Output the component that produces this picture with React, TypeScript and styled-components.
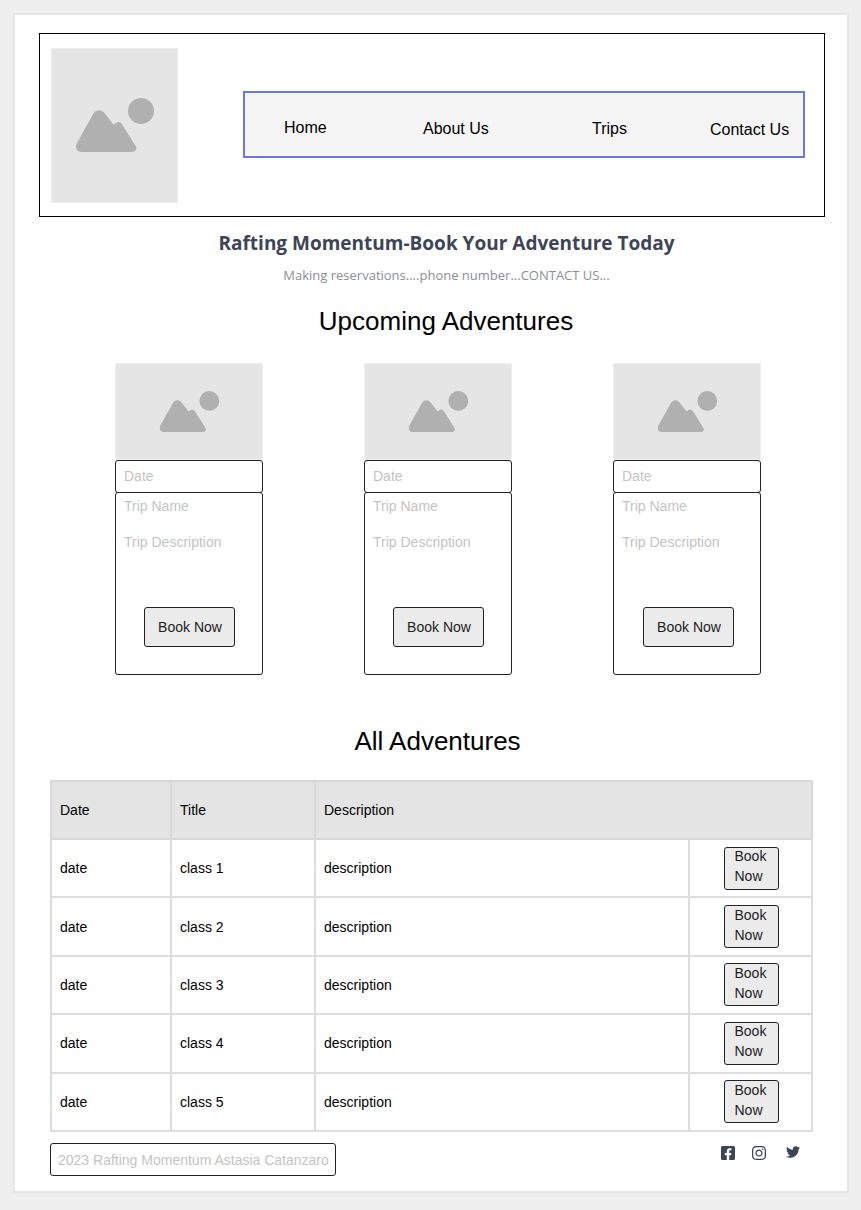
import React from 'react';
import styled, { createGlobalStyle } from 'styled-components';
import { FaFacebookSquare, FaInstagram, FaTwitter } from 'react-icons/fa';

const GlobalStyle = createGlobalStyle`
    html, body {
        margin: 0;
        padding: 0;
        background: #eeeeee;
    }
    body {
        font-family: "Liberation Sans", Arial, sans-serif;
        color: #000;
    }
    * {
        box-sizing: border-box;
    }
`;

const Page = styled.div`
    width: 861px;
    height: 1210px;
    padding: 13px 12px 17px 13px;
`;

const Panel = styled.div`
    height: 1180px;
    background: #fff;
    border: 2px solid #e6e6e6;
    padding-top: 18px;
`;

const Header = styled.header`
    display: flex;
    align-items: center;
    justify-content: space-between;
    width: 786px;
    height: 184px;
    margin-left: 24px;
    padding: 0 19px 0 11px;
    border: 1px solid #000;
`;

const Placeholder = styled.div<{ $width: number; $height: number }>`
    display: flex;
    align-items: center;
    justify-content: center;
    flex: none;
    width: ${(props) => props.$width}px;
    height: ${(props) => props.$height}px;
    background: #e5e5e5;
    border: 1px solid #eeeeee;
`;

const Nav = styled.nav`
    display: grid;
    grid-template-columns: 139px 169px 118px 1fr;
    align-items: center;
    width: 562px;
    height: 67px;
    margin-top: -2px;
    padding: 10px 0 0 39px;
    background: #f5f5f5;
    border: 2px solid #6b78e0;
`;

const NavLink = styled.a<{ $shift: number }>`
    font-size: 16px;
    line-height: 20px;
    color: #000;
    margin-top: ${(props) => props.$shift}px;
`;

const Intro = styled.div`
    margin-left: 31px;
    text-align: center;
`;

const Title = styled.h1`
    margin: 14px 0 0;
    font-family: "Open Sans", sans-serif;
    font-size: 19px;
    font-weight: 700;
    line-height: 24px;
    color: #3d4455;
`;

const Subtitle = styled.p`
    margin: 10px 0 0;
    font-family: "Open Sans", sans-serif;
    font-size: 13px;
    line-height: 20px;
    color: #8b8e99;
`;

const SectionTitle = styled.h2<{ $offset: number; $top: number }>`
    margin: ${(props) => props.$top}px 0 0 ${(props) => props.$offset}px;
    font-size: 26px;
    font-weight: 400;
    line-height: 32px;
    text-align: center;
    color: #000;
`;

const Cards = styled.div`
    display: grid;
    grid-template-columns: repeat(3, 148px);
    column-gap: 101px;
    margin: 26px 0 0 100px;
`;

const Card = styled.article`
    display: flex;
    flex-direction: column;
`;

const DateBox = styled.div`
    height: 33px;
    padding: 6px 8px;
    font-size: 14px;
    line-height: 18px;
    color: #c4c4c4;
    border: 1px solid #222;
    border-radius: 3px;
`;

const CardBody = styled.div`
    display: flex;
    flex-direction: column;
    height: 183px;
    margin-top: -1px;
    padding: 4px 8px 0;
    border: 1px solid #222;
    border-radius: 3px;
`;

const Muted = styled.div`
    font-size: 14px;
    line-height: 18px;
    color: #c4c4c4;
    margin-bottom: 18px;
`;

const BookButton = styled.button<{ $nudge: number }>`
    align-self: center;
    width: 91px;
    height: 40px;
    margin: 38px 0 0 ${(props) => props.$nudge}px;
    padding: 0 0 0 2px;
    font-family: "Liberation Sans", Arial, sans-serif;
    font-size: 14px;
    color: #222;
    background: #ebebeb;
    border: 1px solid #222;
    border-radius: 3px;
`;

const Table = styled.table`
    width: 762px;
    margin: 23px 0 0 35px;
    table-layout: fixed;
    border-collapse: collapse;
    font-size: 14px;
    color: #000;
`;

const HeadRow = styled.tr`
    height: 58px;
    background: #e4e4e4;
`;

const Row = styled.tr`
    height: 58.4px;
`;

const HeadCell = styled.th`
    padding: 8px;
    font-weight: 400;
    text-align: left;
    border: 2px solid #d8d8d8;
`;

const Cell = styled.td`
    padding: 8px;
    border: 2px solid #dddddd;
`;

const ActionCell = styled(Cell)`
    padding: 0 0 0 1px;
    text-align: center;
`;

const RowButton = styled.button`
    display: inline-block;
    vertical-align: middle;
    width: 55px;
    height: 43px;
    padding: 0 10px;
    font-family: "Liberation Sans", Arial, sans-serif;
    font-size: 14px;
    line-height: 20px;
    text-align: left;
    color: #222;
    background: #ebebeb;
    border: 1px solid #222;
    border-radius: 3px;
`;

const RowButtonLabel = styled.span`
    display: block;
    margin: -2px 0 2px;
`;

const Footer = styled.footer`
    display: flex;
    justify-content: space-between;
    align-items: flex-start;
    width: 763px;
    margin: 11px 0 0 35px;
`;

const Credit = styled.div`
    width: 286px;
    height: 33px;
    padding: 7px;
    font-size: 14px;
    line-height: 18px;
    white-space: nowrap;
    color: #c4c4c4;
    border: 1px solid #222;
    border-radius: 3px;
`;

const Socials = styled.div`
    display: grid;
    grid-template-columns: 14px 14px 14px;
    column-gap: 17px;
    align-items: start;
    margin: 2px 17px 0 0;
    color: #3d4455;
    font-size: 16px;
    line-height: 16px;
`;

const TwitterSlot = styled.span`
    margin-left: 4px;
    font-size: 14px;
`;

const MountainIcon = ({ width }: { width: number }) => (
    <svg width={width} viewBox="0 0 80 55" fill="#b0b0b0" aria-hidden="true">
        <circle cx="66" cy="13" r="13" />
        <path d="M7 54C1 54 0 49 2 45L17 18C20 11 27 10 31 17L39 27C41 24 45 22 48 28L60 47C63 51 61 54 56 54Z" />
    </svg>
);

const links = [
    { label: 'Home', shift: -2 },
    { label: 'About Us', shift: 0 },
    { label: 'Trips', shift: 0 },
    { label: 'Contact Us', shift: 2 },
];

const rows = ['class 1', 'class 2', 'class 3', 'class 4', 'class 5'];

export default function App() {
    return (
        <Page>
            <GlobalStyle />
            <Panel>
                <Header>
                    <Placeholder $width={127} $height={155}>
                        <MountainIcon width={80} />
                    </Placeholder>
                    <Nav>
                        {links.map((link) => (
                            <NavLink key={link.label} $shift={link.shift}>
                                {link.label}
                            </NavLink>
                        ))}
                    </Nav>
                </Header>
                <Intro>
                    <Title>Rafting Momentum-Book Your Adventure Today</Title>
                    <Subtitle>Making reservations....phone number...CONTACT US...</Subtitle>
                </Intro>
                <SectionTitle $offset={30} $top={20}>
                    Upcoming Adventures
                </SectionTitle>
                <Cards>
                    {[0, 1, 2].map((i) => (
                        <Card key={i}>
                            <Placeholder $width={148} $height={97}>
                                <MountainIcon width={61} />
                            </Placeholder>
                            <DateBox>Date</DateBox>
                            <CardBody>
                                <Muted>Trip Name</Muted>
                                <Muted>Trip Description</Muted>
                                <BookButton $nudge={i === 2 ? 2 : 0}>Book Now</BookButton>
                            </CardBody>
                        </Card>
                    ))}
                </Cards>
                <SectionTitle $offset={13} $top={50}>
                    All Adventures
                </SectionTitle>
                <Table>
                    <colgroup>
                        <col style={{ width: 120 }} />
                        <col style={{ width: 144 }} />
                        <col style={{ width: 374 }} />
                        <col style={{ width: 123 }} />
                    </colgroup>
                    <thead>
                        <HeadRow>
                            <HeadCell>Date</HeadCell>
                            <HeadCell>Title</HeadCell>
                            <HeadCell colSpan={2}>Description</HeadCell>
                        </HeadRow>
                    </thead>
                    <tbody>
                        {rows.map((row) => (
                            <Row key={row}>
                                <Cell>date</Cell>
                                <Cell>{row}</Cell>
                                <Cell>description</Cell>
                                <ActionCell>
                                    <RowButton>
                                        <RowButtonLabel>Book Now</RowButtonLabel>
                                    </RowButton>
                                </ActionCell>
                            </Row>
                        ))}
                    </tbody>
                </Table>
                <Footer>
                    <Credit>2023 Rafting Momentum Astasia Catanzaro</Credit>
                    <Socials>
                        <FaFacebookSquare />
                        <FaInstagram />
                        <TwitterSlot>
                            <FaTwitter />
                        </TwitterSlot>
                    </Socials>
                </Footer>
            </Panel>
        </Page>
    );
}
